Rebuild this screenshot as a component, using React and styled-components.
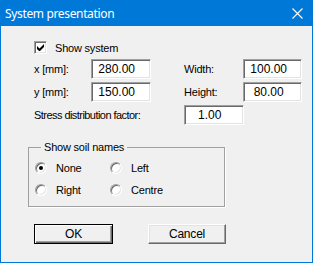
import React from 'react';
import styled, { createGlobalStyle } from 'styled-components';

const GlobalStyle = createGlobalStyle`
  body {
    margin: 0;
    background: #f0f0f0;
    font-family: "Liberation Sans", Arial, sans-serif;
  }
`;

const Window = styled.div`
  width: 313px;
  height: 263px;
  box-sizing: border-box;
  border: 1px solid #0078d7;
  border-top: none;
  background: #f0f0f0;
  display: flex;
  flex-direction: column;
`;

const TitleBar = styled.div`
  height: 26px;
  margin: 0 -1px;
  background: #0078d7;
  color: #fff;
  display: flex;
  align-items: center;
  justify-content: space-between;
  padding: 0 10px 0 5px;
  font-family: "Noto Sans", "Open Sans", sans-serif;
  font-size: 12px;
  letter-spacing: -0.35px;
`;

const CloseIcon = styled.svg`
  width: 11px;
  height: 11px;
  display: block;
`;

const Body = styled.div`
  display: flex;
  flex-direction: column;
  align-items: flex-start;
  padding: 15px 0 0 33px;
  font-size: 11px;
  letter-spacing: -0.2px;
  color: #000;
`;

const CheckRow = styled.label`
  display: flex;
  align-items: center;
  height: 13px;
  gap: 8px;
`;

const CheckBox = styled.span`
  width: 13px;
  height: 13px;
  box-sizing: border-box;
  background: #fff;
  border: 1px solid;
  border-color: #a0a0a0 #fff #fff #a0a0a0;
  box-shadow: inset 1px 1px #696969, inset -1px -1px #e3e3e3;
  display: flex;
  align-items: center;
  justify-content: center;
`;

const FieldGrid = styled.div`
  display: grid;
  grid-template-columns: 57px 60px 33px 59px 59px;
  grid-auto-rows: 20px;
  row-gap: 3px;
  align-items: center;
  margin-top: 5px;
`;

const Label = styled.span`
  white-space: nowrap;
  letter-spacing: ${p => (p.$tight ? '-0.55px' : 'inherit')};
`;

const Input = styled.div`
  width: ${p => p.$w || 60}px;
  height: 20px;
  box-sizing: border-box;
  background: #fff;
  border: 1px solid;
  border-color: #a0a0a0 #fff #fff #a0a0a0;
  box-shadow: inset 1px 1px #696969, inset -1px -1px #e3e3e3;
  padding-left: 3px;
  display: flex;
  align-items: center;
  white-space: pre;
  font-size: 12px;
  letter-spacing: 0;
`;

const StressRow = styled.div`
  display: grid;
  grid-template-columns: 150px 60px;
  align-items: center;
  margin-top: 3px;
`;

const Group = styled.fieldset`
  margin: 16px 0 0 -6px;
  padding: 4px 0 0 6px;
  width: 197px;
  height: 66px;
  box-sizing: border-box;
  border: 1px solid #a0a0a0;
  box-shadow: 1px 1px #fff;
  display: grid;
  grid-template-columns: 75px 90px;
  grid-auto-rows: 22px;
  align-items: center;
`;

const Legend = styled.legend`
  padding: 0 3px;
  margin-left: 6px;
  font-size: 11px;
`;

const RadioRow = styled.label`
  display: flex;
  align-items: center;
  gap: 9px;
`;

const Radio = styled.span`
  width: 12px;
  height: 12px;
  box-sizing: border-box;
  border-radius: 50%;
  background: #fff;
  border: 1px solid;
  border-color: #a0a0a0 #fff #fff #a0a0a0;
  box-shadow: inset 1px 1px #696969, inset -1px -1px #e3e3e3;
  display: flex;
  align-items: center;
  justify-content: center;

  &::after {
    content: '';
    width: 4px;
    height: 4px;
    border-radius: 50%;
    background: ${p => (p.$on ? '#000' : 'transparent')};
  }
`;

const Buttons = styled.div`
  display: flex;
  gap: 35px;
  margin-top: 17px;
`;

const Button = styled.div`
  width: ${p => (p.$default ? 79 : 78)}px;
  height: 20px;
  box-sizing: border-box;
  background: #f0f0f0;
  border: 1px solid;
  border-color: ${p => (p.$default ? '#000' : '#fff #696969 #696969 #fff')};
  box-shadow: ${p =>
    p.$default
      ? 'inset 1px 1px #fff, inset -1px -1px #696969, inset -2px -2px #a0a0a0'
      : 'inset -1px -1px #a0a0a0, inset 1px 1px #e3e3e3'};
  display: flex;
  align-items: center;
  justify-content: center;
  font-size: 12px;
`;

function App() {
  return (
    <>
      <GlobalStyle />
      <Window>
        <TitleBar>
          <span>System presentation</span>
          <CloseIcon viewBox="0 0 11 11">
            <path d="M0.5 0.5L10.5 10.5M10.5 0.5L0.5 10.5" stroke="#fff" strokeWidth="1.1" />
          </CloseIcon>
        </TitleBar>
        <Body>
          <CheckRow>
            <CheckBox>
              <svg width="7" height="7" viewBox="0 0 7 7">
                <path d="M0 2v3l2 2h1l4-4V0L2.5 4.5z" fill="#000" />
              </svg>
            </CheckBox>
            Show system
          </CheckRow>
          <FieldGrid>
            <Label>x [mm]:</Label>
            <Input>{' 280.00'}</Input>
            <span />
            <Label>Width:</Label>
            <Input $w={59}>{' 100.00'}</Input>
            <Label>y [mm]:</Label>
            <Input>{' 150.00'}</Input>
            <span />
            <Label>Height:</Label>
            <Input $w={59}>{'  80.00'}</Input>
          </FieldGrid>
          <StressRow>
            <Label $tight>Stress distribution factor:</Label>
            <Input>{'   1.00'}</Input>
          </StressRow>
          <Group>
            <Legend>Show soil names</Legend>
            <RadioRow><Radio $on />None</RadioRow>
            <RadioRow><Radio />Left</RadioRow>
            <RadioRow><Radio />Right</RadioRow>
            <RadioRow><Radio />Centre</RadioRow>
          </Group>
          <Buttons>
            <Button $default>OK</Button>
            <Button>Cancel</Button>
          </Buttons>
        </Body>
      </Window>
    </>
  );
}

export default App;
